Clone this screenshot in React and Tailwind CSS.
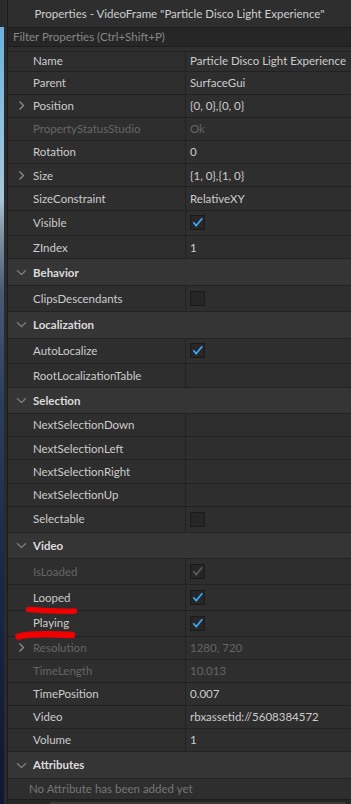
import React from 'react';

const ROW = 'h-[23.15px]';
const CHECK_ROW = 'h-[25.8px]';
const HEAD_ROW = 'h-[26.67px]';

const rows = [
  { label: 'Name', value: 'Particle Disco Light Experience', h: 'h-[20px]' },
  { label: 'Parent', value: 'SurfaceGui' },
  { label: 'Position', value: '{0, 0},{0, 0}', expand: true },
  { label: 'PropertyStatusStudio', value: 'Ok', dim: true },
  { label: 'Rotation', value: '0' },
  { label: 'Size', value: '{1, 0},{1, 0}', expand: true },
  { label: 'SizeConstraint', value: 'RelativeXY' },
  { label: 'Visible', check: true },
  { label: 'ZIndex', value: '1' },
  { section: 'Behavior' },
  { label: 'ClipsDescendants', check: false },
  { section: 'Localization' },
  { label: 'AutoLocalize', check: true },
  { label: 'RootLocalizationTable', value: '' },
  { section: 'Selection' },
  { label: 'NextSelectionDown', value: '' },
  { label: 'NextSelectionLeft', value: '' },
  { label: 'NextSelectionRight', value: '' },
  { label: 'NextSelectionUp', value: '' },
  { label: 'Selectable', check: false },
  { section: 'Video' },
  { label: 'IsLoaded', check: true, dim: true },
  { label: 'Looped', check: true, mark: 'looped' },
  { label: 'Playing', check: true, mark: 'playing' },
  { label: 'Resolution', value: '1280, 720', expand: true, dim: true },
  { label: 'TimeLength', value: '10.013', dim: true },
  { label: 'TimePosition', value: '0.007' },
  { label: 'Video', value: 'rbxassetid://5608384572' },
  { label: 'Volume', value: '1' },
  { section: 'Attributes' },
];

const ChevronRight = () => (
  <svg width="8" height="11" viewBox="0 0 8 11" className="text-[#8a8a8a]">
    <path d="M1.5 1.5 L5.5 5.5 L1.5 9.5" fill="none" stroke="currentColor" strokeWidth="1.4" />
  </svg>
);

const ChevronDown = () => (
  <svg width="11" height="7" viewBox="0 0 11 7" className="text-[#7a7a7a]">
    <path d="M1 1.2 L5.5 5.5 L10 1.2" fill="none" stroke="currentColor" strokeWidth="1.3" />
  </svg>
);

const Checkbox = ({ checked, dim }) => (
  <div className="w-[15px] h-[15px] bg-[#262626] border border-[#1a1a1a] flex items-center justify-center">
    {checked && (
      <svg width="13" height="13" viewBox="0 0 13 13">
        <path
          d="M2.3 6.3 L5.2 9.6 L11.3 2.3"
          fill="none"
          stroke={dim ? '#5a5a5a' : '#3ba6f2'}
          strokeWidth="1.7"
        />
      </svg>
    )}
  </div>
);

// red hand-drawn underlines from the screenshot
const RedMark = ({ kind }) =>
  kind === 'looped' ? (
    <svg className="absolute left-[17px] top-[19px] z-10 overflow-visible" width="54" height="12" viewBox="0 0 54 12">
      <path d="M3.5 5.5 C 16 6.5, 34 8, 49.5 7" fill="none" stroke="#f20000" strokeWidth="5.5" strokeLinecap="round" />
    </svg>
  ) : (
    <svg className="absolute left-[7px] top-[17px] z-10 overflow-visible" width="62" height="14" viewBox="0 0 62 14">
      <path d="M3.5 8.5 C 12 6, 30 5.5, 57 7" fill="none" stroke="#f20000" strokeWidth="6.5" strokeLinecap="round" />
    </svg>
  );

const SectionRow = ({ title }) => (
  <div className={`${HEAD_ROW} flex items-center bg-[#353535] border-b border-[#222]`}>
    <div className="w-[25px] flex justify-center pl-[1px]">
      <ChevronDown />
    </div>
    <span className="font-bold text-[#dcdcdc]">{title}</span>
  </div>
);

const PropRow = ({ row }) => {
  const h = row.h || (row.check !== undefined ? CHECK_ROW : ROW);
  const textColor = row.dim ? 'text-[#656565]' : 'text-[#cccccc]';
  return (
    <div className={`${h} relative flex border-b border-[#222]`}>
      <div className="w-[178px] flex items-center border-r border-[#222]">
        <div className="w-[25px] flex justify-center pl-[2px]">
          {row.expand && <ChevronRight />}
        </div>
        <span className={textColor}>{row.label}</span>
      </div>
      <div className="flex-1 flex items-center pl-[4px] min-w-0">
        {row.check !== undefined ? (
          <Checkbox checked={row.check} dim={row.dim} />
        ) : (
          <span className={`${textColor} whitespace-nowrap`}>{row.value}</span>
        )}
      </div>
      {row.mark && <RedMark kind={row.mark} />}
    </div>
  );
};

export default function App() {
  return (
    <div
      className="flex w-[351px] h-[804px] overflow-hidden bg-[#2e2e2e] text-[11.5px] leading-none"
      style={{ fontFamily: 'Lato, "Open Sans", sans-serif' }}
    >
      {/* viewport peeking out on the left */}
      <div className="w-[8px] flex flex-col border-r border-[#1c1c1c]">
        <div className="h-[27px] bg-[#2a2a2a]" />
        <div className="flex-1 flex">
          <div className="w-[4px] bg-[linear-gradient(to_bottom,#6cb0dc_0%,#8dc0e0_12%,#a9c6d8_22%,#8797a8_26%,#4a5a74_34%,#2c3e60_48%,#1a2848_70%,#0f1730_100%)]" />
          <div className="flex-1 bg-[#2a2a2a]" />
        </div>
      </div>

      <div className="flex-1 flex flex-col min-w-0">
        <div className="h-[26.7px] flex items-center justify-center text-[#cfcfcf] whitespace-nowrap">
          Properties - VideoFrame "Particle Disco Light Experience"
        </div>
        <div className="h-[24px] pb-[4px] border-t border-[#1e1e1e]">
          <div className="h-full bg-[#262626] border-b border-[#1c1c1c] flex items-center pl-[5px] text-[#868686]">
            Filter Properties (Ctrl+Shift+P)
          </div>
        </div>

        <div className="border-t border-[#222]">
          {rows.map((row, i) =>
            row.section ? <SectionRow key={i} title={row.section} /> : <PropRow key={i} row={row} />
          )}
          <div className="h-[21.3px] flex items-center pl-[21px] text-[#767676] border-b border-[#1c1c1c]">
            No Attribute has been added yet
          </div>
        </div>

        <div className="flex-1 flex items-end bg-[#262626]">
          <div className="h-[2.5px] ml-[42px] w-[295px] bg-[#3a3a3a]" />
        </div>
      </div>
    </div>
  );
}
